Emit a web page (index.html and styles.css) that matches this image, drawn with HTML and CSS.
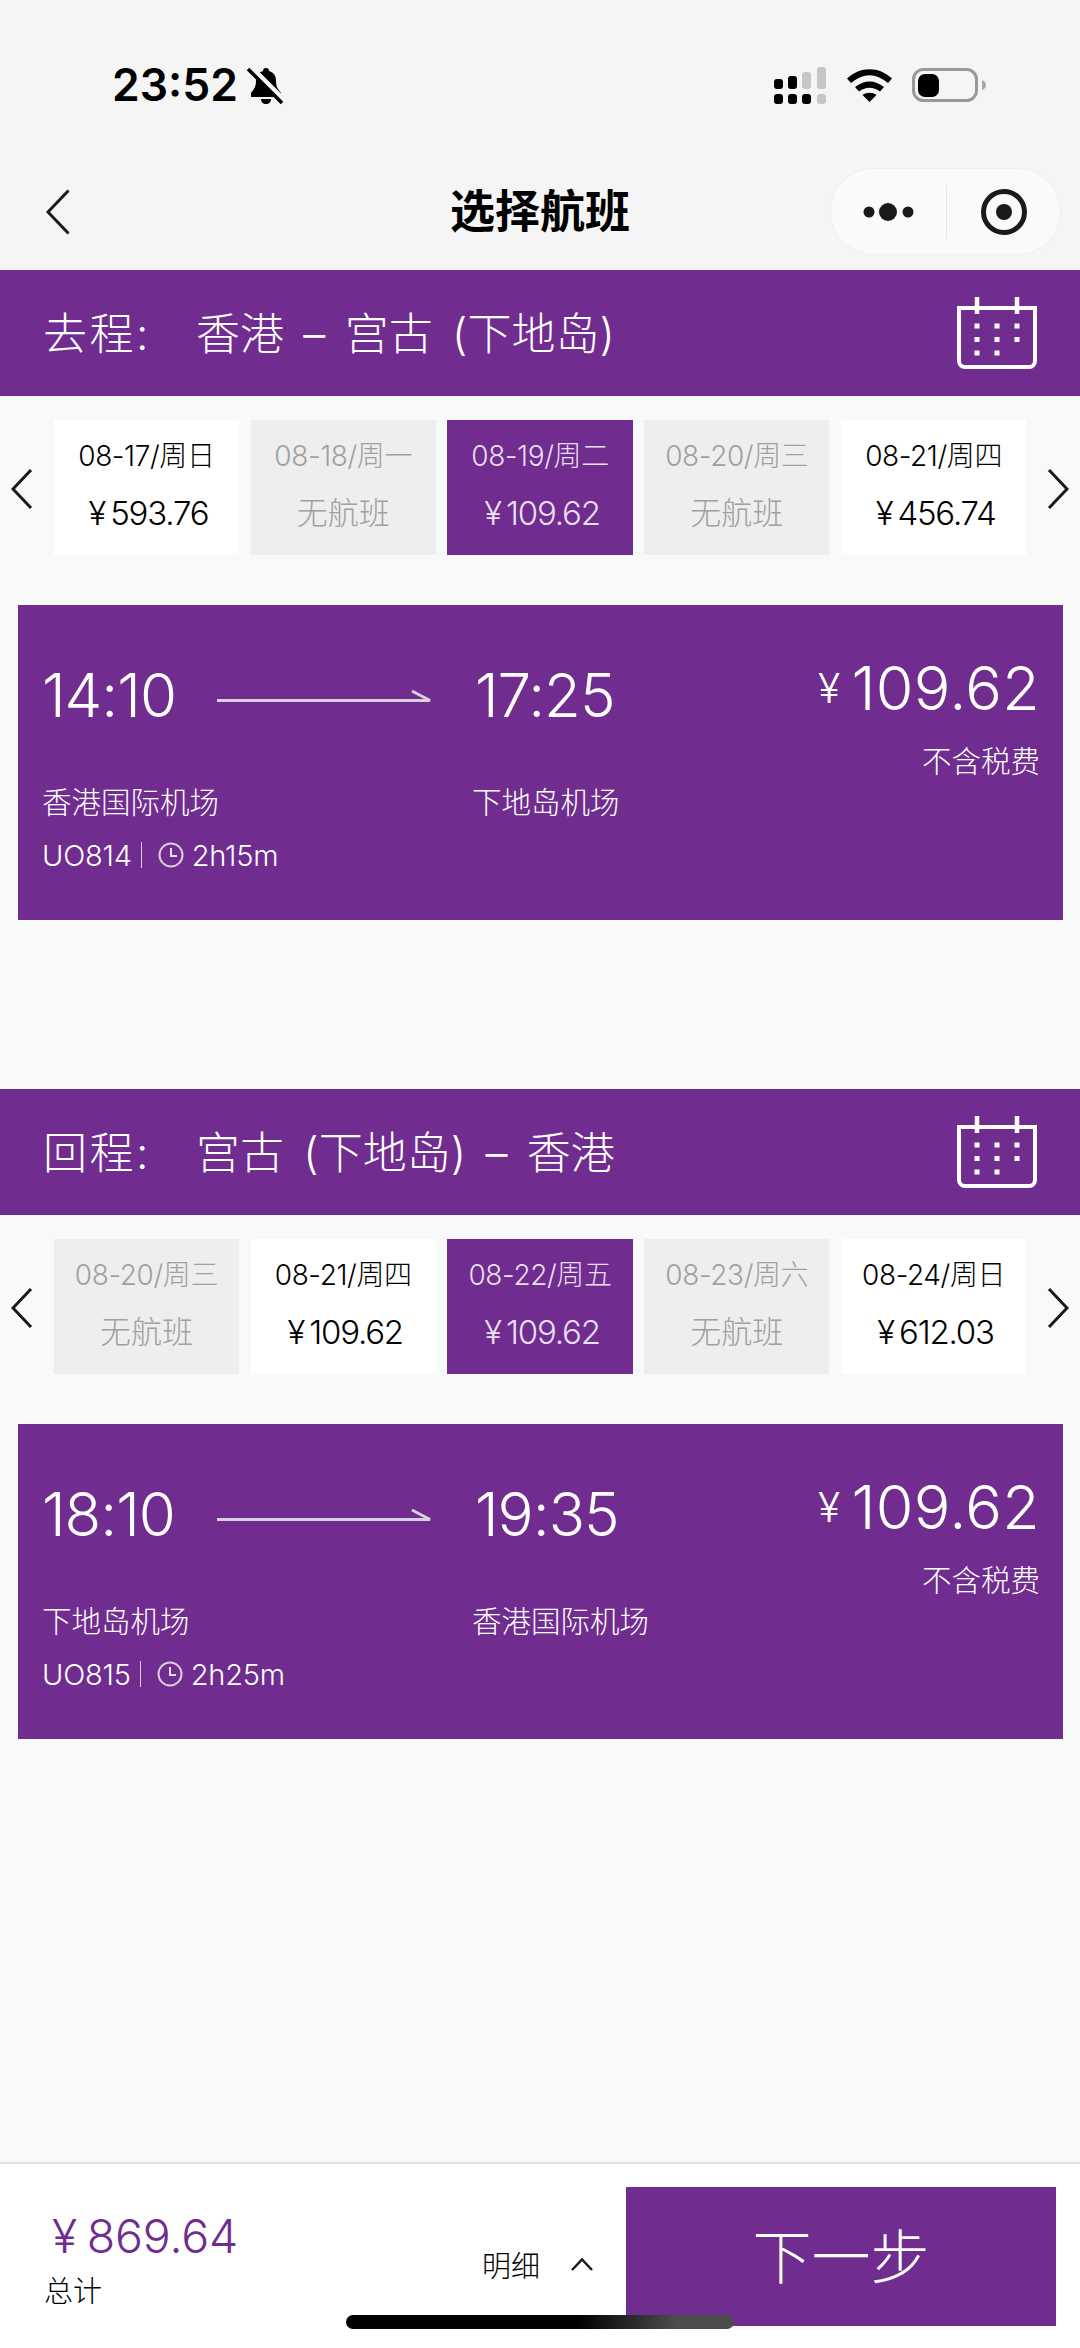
FILE: index.html
```html
<!DOCTYPE html>
<html lang="zh-CN">
<head>
<meta charset="utf-8">
<title>选择航班</title>
<link rel="stylesheet" href="styles.css">
</head>
<body>
<div class="page">
  <header class="top">
    <div class="status">
      <div class="clock-wrap">
        <span class="status-time">23:52</span>
        <svg class="bell" width="38" height="40" viewBox="0 0 38 40"><path d="M20 1c2 0 3 1.200 3 3 5 1.500 7 5 7 10 0 6 2 8 5 12v4H5v-4c3-4 5-6 5-12 0-5 2-8.500 7-10 0-1.800 1-3 3-3z" fill="#000"/><path d="M15 32h10c0 3-2 5-5 5s-5-2-5-5z" fill="#000"/><path d="M5 0l34 34" stroke="#f5f5f5" stroke-width="5"/><path d="M2 2l34 34" stroke="#000" stroke-width="3.500"/></svg>
      </div>
      <div class="status-right">
        <svg width="54" height="38" viewBox="0 0 54 38"><g fill="#000"><rect x="1" y="12" width="9" height="10" rx="3"/><rect x="15" y="9" width="9" height="13" rx="3"/><rect x="1" y="27" width="9" height="10" rx="3"/><rect x="15" y="27" width="9" height="10" rx="3"/><rect x="29" y="27" width="9" height="10" rx="3"/></g><g fill="#c6c6c6"><rect x="29" y="5" width="9" height="17" rx="3"/><rect x="44" y="0" width="9" height="22" rx="3"/><rect x="44" y="27" width="9" height="10" rx="3"/></g></svg>
        <svg width="45" height="33" viewBox="0 0 45 33"><path d="M0 9.500C13-3 32-3 45 9.500l-4 4.500C29 3.500 16 3.500 4 14z" fill="#000"/><path d="M8 18c9-7.500 20-7.500 29 0l-4 4.500c-7-5-14-5-21 0z" fill="#000"/><path d="M15.500 26c4-3 10-3 14 0l-7 7z" fill="#000"/></svg>
        <svg class="battery" width="74" height="34" viewBox="0 0 74 34"><rect x="1.500" y="1.500" width="63" height="31" rx="10" fill="none" stroke="#999" stroke-width="3"/><rect x="6" y="6" width="21" height="23" rx="7" fill="#000"/><path d="M70 12c3 1 4 3 4 5s-1 4-4 5z" fill="#aaa"/></svg>
      </div>
    </div>
    <nav class="nav">
      <svg class="back" width="24" height="46" viewBox="0 0 24 46"><path d="M22.500 1.500L2 23l20.500 21.500" fill="none" stroke="#1a1a1a" stroke-width="3"/></svg>
      <h1 class="nav-title">选择航班</h1>
      <div class="capsule">
        <svg width="64" height="20" viewBox="0 0 64 20"><circle cx="6" cy="10" r="5.500" fill="#1a1a1a"/><circle cx="25" cy="10" r="9" fill="#1a1a1a"/><circle cx="45" cy="10" r="5.500" fill="#1a1a1a"/></svg>
        <span class="capsule-line"></span>
        <svg width="46" height="46" viewBox="0 0 46 46"><circle cx="23" cy="23" r="20.500" fill="none" stroke="#1a1a1a" stroke-width="5"/><circle cx="23" cy="23" r="8" fill="#1a1a1a"/></svg>
      </div>
    </nav>
  </header>

  <main class="main">
    <section class="leg">
      <div class="leg-head">
        <h2 class="leg-title"><span class="leg-label">去程:</span><span>香港 – 宫古 (下地岛)</span></h2>
        <svg class="cal" width="80" height="72" viewBox="0 0 80 72"><path d="M2 11h76v53a6 6 0 0 1-6 6H8a6 6 0 0 1-6-6z" fill="none" stroke="#fff" stroke-width="4"/><path d="M20 0v17M60 0v17" stroke="#fff" stroke-width="4.500"/><g fill="#fff"><rect x="17.500" y="26.500" width="5" height="5"/><rect x="37.500" y="26.500" width="5" height="5"/><rect x="57.500" y="26.500" width="5" height="5"/><rect x="17.500" y="40" width="5" height="5"/><rect x="37.500" y="40" width="5" height="5"/><rect x="57.500" y="40" width="5" height="5"/><rect x="17.500" y="53.500" width="5" height="5"/><rect x="37.500" y="53.500" width="5" height="5"/></g></svg>
      </div>
      <div class="dates">
        <svg class="pager" width="22" height="40" viewBox="0 0 22 40"><path d="M20 1L2 20l18 19" fill="none" stroke="#1a1a1a" stroke-width="3"/></svg>
        <div class="date-list">
          <div class="day"><span class="day-date">08-17/周日</span><span class="day-price">¥ 593.76</span></div>
          <div class="day off"><span class="day-date">08-18/周一</span><span class="day-none">无航班</span></div>
          <div class="day on"><span class="day-date">08-19/周二</span><span class="day-price">¥ 109.62</span></div>
          <div class="day off"><span class="day-date">08-20/周三</span><span class="day-none">无航班</span></div>
          <div class="day"><span class="day-date">08-21/周四</span><span class="day-price">¥ 456.74</span></div>
        </div>
        <svg class="pager" width="22" height="40" viewBox="0 0 22 40"><path d="M2 1l18 19L2 39" fill="none" stroke="#1a1a1a" stroke-width="3"/></svg>
      </div>
      <article class="card">
        <div class="card-route">
          <div class="card-times">
            <span class="time time-a">14:10</span>
            <svg class="arrow" width="215" height="14" viewBox="0 0 215 14"><path d="M0 11.500h213L195 2" fill="none" stroke="#d9d0df" stroke-width="3"/></svg>
            <span class="time">17:25</span>
          </div>
          <div class="card-ports"><span class="port">香港国际机场</span><span class="port">下地岛机场</span></div>
          <div class="card-flight">
            <span>UO814</span><span class="flight-line"></span>
            <svg width="26" height="26" viewBox="0 0 26 26"><circle cx="13" cy="13" r="11.500" fill="none" stroke="#d9d0df" stroke-width="2"/><path d="M13 6v8h6" fill="none" stroke="#e8dff0" stroke-width="2"/></svg>
            <span>2h15m</span>
          </div>
        </div>
        <div class="card-fare">
          <div class="fare-price"><span class="fare-yen">¥</span>109.62</div>
          <div class="fare-note">不含税费</div>
        </div>
      </article>
    </section>

    <section class="leg">
      <div class="leg-head">
        <h2 class="leg-title"><span class="leg-label">回程:</span><span>宫古 (下地岛) – 香港</span></h2>
        <svg class="cal" width="80" height="72" viewBox="0 0 80 72"><path d="M2 11h76v53a6 6 0 0 1-6 6H8a6 6 0 0 1-6-6z" fill="none" stroke="#fff" stroke-width="4"/><path d="M20 0v17M60 0v17" stroke="#fff" stroke-width="4.500"/><g fill="#fff"><rect x="17.500" y="26.500" width="5" height="5"/><rect x="37.500" y="26.500" width="5" height="5"/><rect x="57.500" y="26.500" width="5" height="5"/><rect x="17.500" y="40" width="5" height="5"/><rect x="37.500" y="40" width="5" height="5"/><rect x="57.500" y="40" width="5" height="5"/><rect x="17.500" y="53.500" width="5" height="5"/><rect x="37.500" y="53.500" width="5" height="5"/></g></svg>
      </div>
      <div class="dates">
        <svg class="pager" width="22" height="40" viewBox="0 0 22 40"><path d="M20 1L2 20l18 19" fill="none" stroke="#1a1a1a" stroke-width="3"/></svg>
        <div class="date-list">
          <div class="day off"><span class="day-date">08-20/周三</span><span class="day-none">无航班</span></div>
          <div class="day"><span class="day-date">08-21/周四</span><span class="day-price">¥ 109.62</span></div>
          <div class="day on"><span class="day-date">08-22/周五</span><span class="day-price">¥ 109.62</span></div>
          <div class="day off"><span class="day-date">08-23/周六</span><span class="day-none">无航班</span></div>
          <div class="day"><span class="day-date">08-24/周日</span><span class="day-price">¥ 612.03</span></div>
        </div>
        <svg class="pager" width="22" height="40" viewBox="0 0 22 40"><path d="M2 1l18 19L2 39" fill="none" stroke="#1a1a1a" stroke-width="3"/></svg>
      </div>
      <article class="card">
        <div class="card-route">
          <div class="card-times">
            <span class="time time-a">18:10</span>
            <svg class="arrow" width="215" height="14" viewBox="0 0 215 14"><path d="M0 11.500h213L195 2" fill="none" stroke="#d9d0df" stroke-width="3"/></svg>
            <span class="time">19:35</span>
          </div>
          <div class="card-ports"><span class="port">下地岛机场</span><span class="port">香港国际机场</span></div>
          <div class="card-flight">
            <span>UO815</span><span class="flight-line"></span>
            <svg width="26" height="26" viewBox="0 0 26 26"><circle cx="13" cy="13" r="11.500" fill="none" stroke="#d9d0df" stroke-width="2"/><path d="M13 6v8h6" fill="none" stroke="#e8dff0" stroke-width="2"/></svg>
            <span>2h25m</span>
          </div>
        </div>
        <div class="card-fare">
          <div class="fare-price"><span class="fare-yen">¥</span>109.62</div>
          <div class="fare-note">不含税费</div>
        </div>
      </article>
    </section>
  </main>

  <footer class="foot">
    <div class="total">
      <div class="total-price">¥ 869.64</div>
      <div class="total-label">总计</div>
    </div>
    <div class="detail">
      <span>明细</span>
      <svg width="22" height="13" viewBox="0 0 22 13"><path d="M1 12L11 1.500 21 12" fill="none" stroke="#1a1a1a" stroke-width="2.500"/></svg>
    </div>
    <button class="next" type="button">下一步</button>
    <div class="home-bar"></div>
  </footer>
</div>
</body>
</html>
```

FILE: styles.css
```css
* { box-sizing: border-box; margin: 0; padding: 0; }
html, body { width: 1080px; height: 2348px; overflow: hidden; }
body {
  background: #f8f9f9;
  font-family: Inter, "Noto Sans CJK SC", sans-serif;
  color: #000;
}
.page { width: 1080px; height: 2348px; display: flex; flex-direction: column; }

.top { background: #f5f5f5; height: 270px; flex: none; }
.status { height: 168px; display: flex; justify-content: space-between; padding: 67px 94px 0 112px; }
.clock-wrap { display: flex; align-items: flex-start; gap: 8px; height: 40px; }
.status-time { font-size: 44.500px; font-weight: 600; line-height: 36px; }
.status-right { display: flex; align-items: flex-start; gap: 20px; height: 38px; }
.status-right svg:nth-child(2) { margin-top: 2px; }
.battery { margin-top: 1px; }

.nav { height: 102px; position: relative; display: flex; align-items: flex-start; padding-left: 46px; }
.back { margin-top: 21px; }
.nav-title {
  position: absolute; left: 0; right: 0; top: 16px;
  text-align: center; font-size: 45px; line-height: 50px; font-weight: 700;
  font-family: "Noto Sans CJK SC", sans-serif;
}
.capsule {
  position: absolute; left: 830px; top: 0; width: 231px; height: 87px;
  background: #fafafa; border: 1px solid #f0f0f0; border-radius: 44px;
  display: flex; align-items: center; padding-left: 32px;
}
.capsule-line { width: 1px; height: 54px; background: #e6e6e6; margin-left: 19px; margin-right: 34px; }

.main { flex: 1; display: flex; flex-direction: column; }
.leg { height: 819px; flex: none; }
.leg-head {
  height: 126px; background: #702c8f; color: #fff;
  display: flex; justify-content: space-between; align-items: flex-start;
  padding: 27px 43px 0 43px;
}
.leg-title { display: flex; font-size: 44px; line-height: 60px; font-weight: 300; margin-top: 7px; word-spacing: 7px; }
.leg-label { width: 153px; letter-spacing: 2.500px; }

.dates { display: flex; align-items: center; justify-content: space-between; height: 135px; margin-top: 24px; padding: 2px 11px 0 11px; }
.pager { flex: none; }
.date-list { display: flex; gap: 11.500px; margin: -2px 0 0 0; }
.day {
  width: 185.300px; height: 135px; background: #fff;
  display: flex; flex-direction: column; align-items: center;
  padding-top: 18px;
}
.day.off { background: #eeeeee; color: #a0a0a0; }
.day.on { background: #702c8f; color: #e8dff0; }
.day-date { font-size: 28px; line-height: 36px; font-weight: 300; letter-spacing: -0.4px; }
.day-price { font-size: 33px; line-height: 44px; margin-top: 17px; margin-left: 4px; font-weight: 300; letter-spacing: -1.200px; word-spacing: -3px; }
.day-none { font-size: 31px; line-height: 44px; margin-top: 17px; font-weight: 300; }

.card {
  height: 315px; margin: 50px 17px 0 18px;
  background: #702c8f; color: #fff;
  display: flex; justify-content: space-between;
  padding: 55px 23px 0 24px;
}
.card-route { width: 620px; }
.card-times { display: flex; align-items: center; height: 70px; }
.time { font-size: 60px; line-height: 70px; font-weight: 300; letter-spacing: -1px; }
.time-a { width: 175px; flex: none; }
.arrow { margin-top: 1px; margin-right: 43px; flex: none; }
.card-ports { display: flex; margin-top: 52px; height: 40px; }
.port { flex: none; width: 430px; font-size: 29.500px; line-height: 40px; font-weight: 300; }
.card-flight { display: flex; align-items: center; margin-top: 13px; height: 40px; font-size: 29px; font-weight: 300; letter-spacing: -0.2px; }
.flight-line { width: 1px; height: 26px; background: #d9d0df; margin: 0 16px 0 9px; }
.card-flight svg { margin-right: 8px; }
.card-fare { text-align: right; margin-top: -7px; }
.fare-price { font-size: 61px; line-height: 70px; font-weight: 350; letter-spacing: 0.3px; }
.fare-yen { font-size: 41px; margin-right: 11px; vertical-align: 7px; font-weight: 300; }
.fare-note { font-size: 29.500px; line-height: 40px; margin-top: 18px; font-weight: 300; }

.foot {
  flex: none; height: 186px; background: #fff; border-top: 2px solid #e2e2e2;
  display: flex; position: relative; padding: 23px 24px 0 44px;
}
.total { width: 438px; }
.total-price { color: #702c8f; font-size: 46.500px; line-height: 56px; font-weight: 300; margin-left: 8px; margin-top: 21px; word-spacing: -3px; letter-spacing: -0.2px; }
.total-label { font-size: 29px; line-height: 40px; margin-top: 8px; font-weight: 300; }
.detail { width: 144px; flex: none; display: flex; align-items: center; gap: 31px; font-size: 29px; height: 40px; margin-top: 57px; font-weight: 300; }
.next {
  width: 430px; height: 139px; border: 0; background: #702c8f; color: #fff;
  font-family: inherit; font-size: 59px; font-weight: 300; padding-bottom: 6px;
}
.home-bar {
  position: absolute; left: 346px; top: 151px; width: 388px; height: 14px; border-radius: 7px;
  background: linear-gradient(90deg, #000 0%, #000 60%, #4c4c4c 85%, #4c4c4c 100%);
}
```
